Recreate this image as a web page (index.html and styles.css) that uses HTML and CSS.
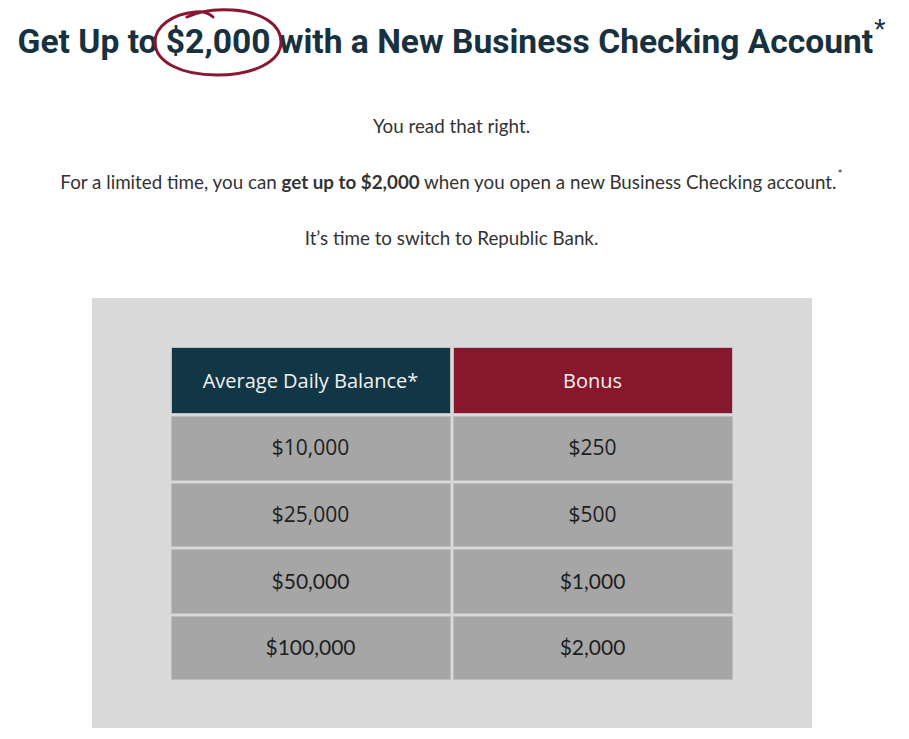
FILE: index.html
```html
<!DOCTYPE html>
<html>
<head>
<meta charset="utf-8">
<link rel="stylesheet" href="styles.css">
</head>
<body>
<main class="page">
  <h1 class="title">Get Up to <span class="circled">$2,000<svg class="circle" viewBox="0 0 132 70" width="132" height="70" aria-hidden="true"><path d="M34 9 C 48 2, 66 1, 80 2 C 108 4, 128 16, 128 34 C 128 54, 100 67, 64 67 C 28 67, 2 54, 2 34 C 2 18, 20 6, 42 4 C 50 3, 56 5, 60 9" fill="none" stroke="#8a1732" stroke-width="3" stroke-linecap="round" stroke-linejoin="round"/></svg></span> with a New Business Checking Account<sup class="star">*</sup></h1>
  <p class="lead">You read that right.</p>
  <p class="lead">For a limited time, you can <strong>get up to $2,000</strong> when you open a new Business Checking account.<sup class="mini">*</sup></p>
  <p class="lead">It’s time to switch to Republic Bank.</p>
  <section class="panel">
    <table class="rates">
      <thead>
        <tr><th class="h-balance">Average Daily Balance*</th><th class="h-bonus">Bonus</th></tr>
      </thead>
      <tbody>
        <tr><td>$10,000</td><td>$250</td></tr>
        <tr><td>$25,000</td><td>$500</td></tr>
        <tr><td class="alt">$50,000</td><td class="alt">$1,000</td></tr>
        <tr><td class="alt">$100,000</td><td class="alt">$2,000</td></tr>
      </tbody>
    </table>
  </section>
</main>
</body>
</html>
```
FILE: styles.css
```css
html, body {
  margin: 0;
  padding: 0;
  background: #ffffff;
}
.page {
  width: 903px;
  display: flex;
  flex-direction: column;
  align-items: center;
}
.title {
  font-family: Roboto, "Liberation Sans", sans-serif;
  font-weight: 700;
  font-size: 33.6px;
  line-height: 38px;
  color: #17313f;
  margin: 23px 0 51px;
  text-align: center;
  letter-spacing: 0;
}
.circled {
  position: relative;
  display: inline-block;
}
.circle {
  position: absolute;
  left: -13px;
  top: -15px;
  pointer-events: none;
}
.star {
  font-size: 26px;
  font-weight: 400;
  vertical-align: top;
  line-height: 1;
  position: relative;
  top: -7px;
  margin-left: 1px;
}
.lead {
  font-family: Lato, "Liberation Sans", sans-serif;
  font-size: 18.8px;
  line-height: 28px;
  color: #333333;
  margin: 0 0 28px;
  text-align: center;
}
.lead strong {
  font-weight: 700;
}
.mini {
  font-size: 12px;
  vertical-align: top;
  line-height: 1;
  position: relative;
  top: 0;
  margin-left: 1px;
}
.panel {
  margin-top: 18px;
  width: 720px;
  box-sizing: border-box;
  padding: 49px 0 48px;
  background: #d9d9d9;
  display: flex;
  justify-content: center;
}
.rates {
  border-collapse: separate;
  border-spacing: 2px;
  margin: -2px;
}
.rates th,
.rates td {
  width: 278px;
  border: 1px solid #bdbdbd;
  text-align: center;
  vertical-align: middle;
  padding: 0;
}
.rates th {
  font-family: "Open Sans", Lato, sans-serif;
  font-weight: 400;
  font-size: 20px;
  color: #f2f2f2;
  height: 65px;
}
.h-balance {
  background: #113646;
}
.h-bonus {
  background: #86172c;
}
.rates td {
  height: 60.5px;
  padding-bottom: 2px;
  background: #a6a6a6;
  font-family: "Open Sans", Lato, sans-serif;
  font-size: 21px;
  color: #1e1e1e;
}
.rates td.alt {
  font-family: Lato, "Open Sans", sans-serif;
  font-size: 21px;
}
```
